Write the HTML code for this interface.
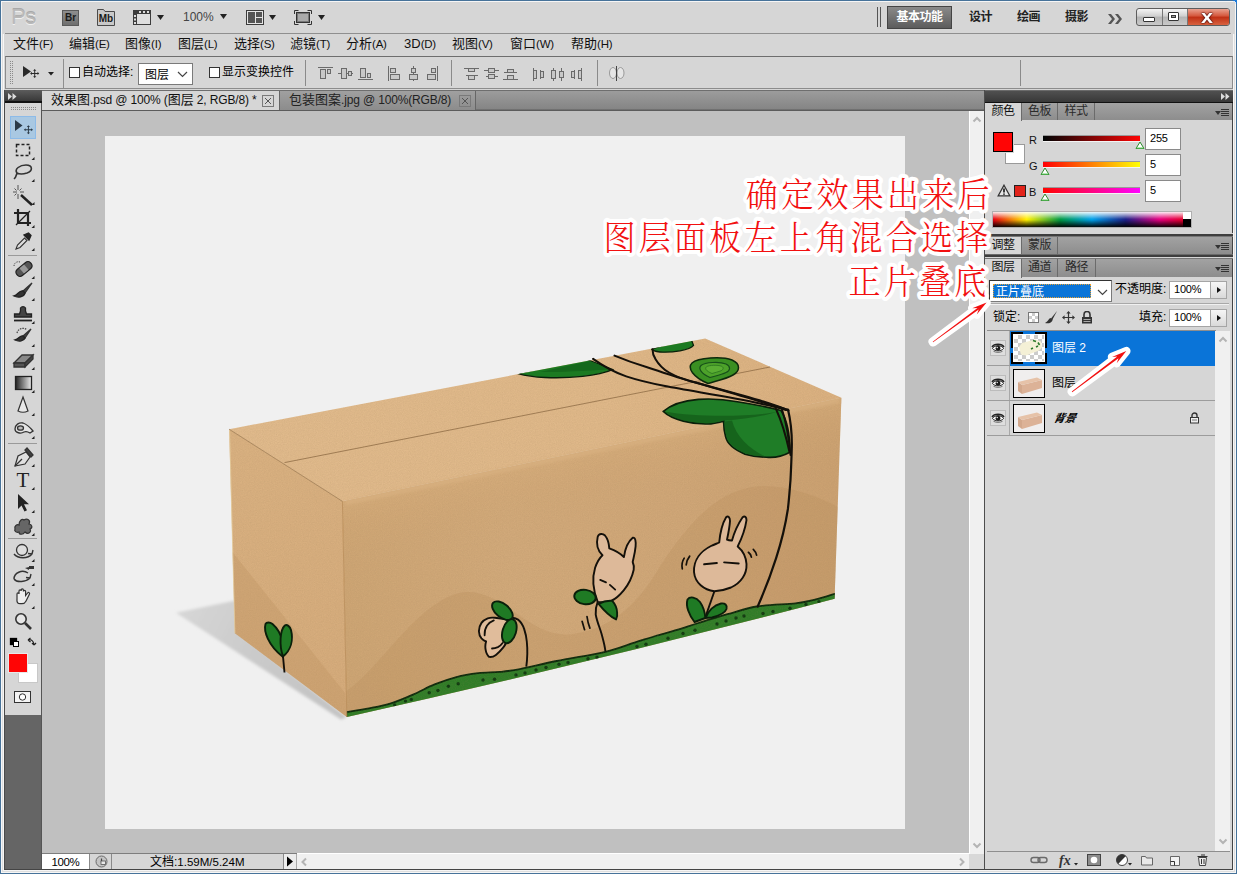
<!DOCTYPE html>
<html lang="zh-CN">
<head>
<meta charset="utf-8">
<title>Photoshop</title>
<style>
html,body{margin:0;padding:0;}
body{width:1237px;height:874px;overflow:hidden;background:#d6d6d6;font-family:"Liberation Sans","Noto Sans CJK SC",sans-serif;font-size:12px;color:#000;position:relative;}
.abs{position:absolute;}
#frame{position:absolute;left:0;top:0;width:1237px;height:874px;box-sizing:border-box;}
/* app bar */
#appbar{left:2px;top:2px;width:1232px;height:31px;background:#d6d6d6;}
#menubar{left:2px;top:34px;width:1232px;height:21px;background:#d6d6d6;}
.menu{position:absolute;top:36px;font-size:13px;line-height:16px;white-space:nowrap;color:#111;}
#optbar{left:5px;top:56px;width:1228px;height:33px;box-sizing:border-box;border:1px solid #8c8c8c;border-top-color:#6e6e6e;background:#d6d6d6;}
#tabbar{left:42px;top:90px;width:942px;height:21px;background:linear-gradient(#6e6e6e 0 1px,#9c9c9c 1px,#858585 19px,#5c5c5c 20px);}
.tab{position:absolute;top:91px;height:19px;box-sizing:border-box;font-size:13px;line-height:18px;white-space:nowrap;color:#222;}
#pasteboard{left:42px;top:111px;width:927px;height:743px;background:#c0c0c0;}
#doc{left:105px;top:136px;width:800px;height:693px;background:#f0f0f0;}
#toolbar{left:5px;top:103px;width:36px;height:612px;background:#d6d6d6;}
#tooldark{left:4px;top:715px;width:38px;height:154px;background:#656565;}
#toolhead{left:5px;top:90px;width:37px;height:13px;background:linear-gradient(#5c5c5c,#383838 85%,#111 86%);}
#rpanel{left:985px;top:90px;width:247px;height:779px;background:#d6d6d6;}
.ptabs{position:absolute;left:985px;width:247px;height:18px;background:linear-gradient(#a2a2a2,#8d8d8d);}
.ptab{position:absolute;top:0;height:18px;box-sizing:border-box;font-size:12px;letter-spacing:-0.5px;line-height:17px;text-align:center;color:#2a2a2a;border-right:1px solid #6b6b6b;}
.ptab.on{background:#d6d6d6;color:#111;height:19px;}
.ws{top:9px;font-size:12px;font-weight:bold;line-height:16px;color:#222;letter-spacing:-0.6px;}
.k{font-size:11.5px;letter-spacing:-0.2px;}
.cb{width:11px;height:11px;box-sizing:border-box;border:1px solid #333;background:#fff;}
.ot{font-size:12px;line-height:18px;white-space:nowrap;color:#000;}
.vs{top:60px;width:1px;height:26px;background:#8a8a8a;}
.xb{position:absolute;top:4px;width:12px;height:12px;box-sizing:border-box;border:1px solid #7a7a7a;background:linear-gradient(45deg,transparent 45%,#555 45% 55%,transparent 55%) center/6px 6px no-repeat,linear-gradient(-45deg,transparent 45%,#555 45% 55%,transparent 55%) center/6px 6px no-repeat;}
.l{font-size:12px;letter-spacing:-0.15px;}
.pm{position:absolute;right:3px;top:6px;width:13px;height:8px;background:linear-gradient(#333 0 1px,transparent 1px 2px,#333 2px 3px,transparent 3px 4px,#333 4px 5px,transparent 5px 6px,#333 6px 7px,transparent 7px) 5px 0/8px 8px no-repeat,linear-gradient(135deg,transparent 0,transparent 100%);}
.pm:before{content:"";position:absolute;left:-1px;top:2px;border:3px solid transparent;border-top:4px solid #333;}
.lb{font-size:11px;line-height:16px;color:#111;}
.sl{left:1043px;width:97px;height:5px;box-shadow:0 1px 0 #f4f4f4,0 -1px 0 #9a9a9a;}
.pt{font-size:12px;line-height:16px;white-space:nowrap;}
.sb{width:17px;height:18px;box-sizing:border-box;border:1px solid #a5a5a5;background:linear-gradient(#f6f6f6,#d9d9d9);}
.sb:after{content:"";position:absolute;left:6px;top:5px;border:3px solid transparent;border-left:4px solid #111;border-right:none;}
.th{left:1013px;width:32px;height:29px;box-sizing:border-box;border:1px solid #000;background:#f0eeee;}
.inp{position:absolute;background:#fff;border:1px solid #8a8a8a;box-sizing:border-box;font-size:11px;letter-spacing:-0.2px;line-height:14px;padding-left:4px;}
</style>
</head>
<body>
<div id="frame">
<div id="appbar" class="abs"></div>
<div id="menubar" class="abs"></div>

<!-- ===== application bar ===== -->
<div class="abs" style="left:11px;top:3px;font-size:22px;line-height:28px;color:#b9b9b9;letter-spacing:-0.5px;text-shadow:0 1px 0 #f2f2f2,0 -1px 0 #a8a8a8;">Ps</div>
<div class="abs" style="left:62px;top:10px;width:17px;height:16px;box-sizing:border-box;background:linear-gradient(#8e8e8e,#6f6f6f);border:1px solid #5a5a5a;color:#1a1a1a;font-size:10px;font-weight:bold;line-height:14px;text-align:center;">Br</div>
<svg class="abs" style="left:96px;top:8px" width="20" height="19" viewBox="0 0 20 19"><path d="M1.5 1.5h6l1.5 2h9.500v14h-17z" fill="#c9c9c9" stroke="#4a4a4a"/><text x="10" y="14" font-size="10" font-weight="bold" text-anchor="middle" fill="#1a1a1a" font-family="Liberation Sans, sans-serif">Mb</text></svg>
<svg class="abs" style="left:132px;top:9px" width="34" height="17" viewBox="0 0 34 17"><rect x="1.5" y="1.500" width="17" height="14" fill="#dedede" stroke="#3c3c3c"/><rect x="1" y="1" width="18" height="4" fill="#3c3c3c"/><rect x="1" y="1" width="4" height="15" fill="#3c3c3c"/><g fill="#ddd"><rect x="2" y="6" width="2" height="2"/><rect x="2" y="9.500" width="2" height="2"/><rect x="2" y="13" width="2" height="2"/><rect x="7" y="2" width="2" height="2"/><rect x="11" y="2" width="2" height="2"/><rect x="15" y="2" width="2" height="2"/></g><path d="M25 6h7l-3.500 5z" fill="#222"/></svg>
<div class="abs" style="left:183px;top:10px;font-size:12px;line-height:14px;color:#444;">100%</div>
<svg class="abs" style="left:219px;top:13px" width="9" height="7"><path d="M1 1h7l-3.500 5z" fill="#222"/></svg>
<svg class="abs" style="left:245px;top:9px" width="34" height="17" viewBox="0 0 34 17"><rect x="1.500" y="1.500" width="17" height="14" fill="#e6e6e6" stroke="#3c3c3c"/><rect x="3" y="3" width="7" height="11" fill="#555"/><rect x="11" y="3" width="6" height="5" fill="#555"/><rect x="11" y="9" width="6" height="5" fill="#555"/><path d="M24 6h7l-3.500 5z" fill="#222"/></svg>
<svg class="abs" style="left:293px;top:9px" width="34" height="17" viewBox="0 0 34 17"><path d="M1.500 5v-3.500h4M14.500 1.500h4v3.500M18.500 12v3.500h-4M5.500 15.500h-4v-3.500" fill="none" stroke="#333"/><rect x="3.500" y="3.500" width="13" height="10" fill="#777" stroke="#333"/><rect x="5" y="5" width="10" height="7" fill="#aaa"/><path d="M25 6h7l-3.500 5z" fill="#222"/></svg>
<div class="abs" style="left:877px;top:7px;width:1px;height:20px;background:#555;"></div><div class="abs" style="left:880px;top:7px;width:1px;height:20px;background:#555;"></div>
<div class="abs" style="left:887px;top:6px;width:65px;height:23px;box-sizing:border-box;border:1px solid #444;background:linear-gradient(#8a8a8a,#5c5c5c);color:#fff;font-size:12px;font-weight:bold;line-height:20px;text-align:center;letter-spacing:-0.500px;">基本功能</div>
<div class="abs ws" style="left:969px;">设计</div>
<div class="abs ws" style="left:1017px;">绘画</div>
<div class="abs ws" style="left:1065px;">摄影</div>
<svg class="abs" style="left:1107px;top:12.500px" width="16" height="12" viewBox="0 0 16 12"><path d="M1 1h3l4 5-4 5h-3l4-5zM8 1h3l4 5-4 5h-3l4-5z" fill="#555"/></svg>
<!-- window buttons -->
<div class="abs" style="left:1136px;top:8px;width:94px;height:18px;box-sizing:border-box;border:1px solid #5d5d5d;border-radius:3px;background:linear-gradient(#f4f4f4,#cfcfcf 45%,#b4b4b4 50%,#c9c9c9);overflow:hidden;">
 <div class="abs" style="left:25px;top:0;width:1px;height:16px;background:#777;"></div>
 <div class="abs" style="left:50px;top:0;width:42px;height:16px;background:linear-gradient(#e9a18f,#d4553a 45%,#bf2f14 50%,#d8623f);border-left:1px solid #777;"></div>
 <div class="abs" style="left:6px;top:8px;width:10px;height:3px;border:1px solid #333;background:#fff;border-radius:1px;"></div>
 <div class="abs" style="left:31px;top:3px;width:9px;height:7px;border:1px solid #333;background:#fff;border-radius:1px;"><div class="abs" style="left:2px;top:2px;width:3px;height:1px;border:1px solid #333;background:#999;"></div></div>
 <div class="abs" style="left:65px;top:-1.500px;transform:scaleX(1.2);font-size:18px;font-weight:bold;color:#fff;line-height:18px;text-shadow:0 0 2px #400,0 0 1px #400,0 0 1px #400;">x</div>
</div>
<div class="abs" style="left:5px;top:33px;width:1226px;height:1px;background:#8f8f8f;"></div>
<!-- ===== menu bar ===== -->
<div class="menu" style="left:13px;">文件<span class="k">(F)</span></div>
<div class="menu" style="left:69px;">编辑<span class="k">(E)</span></div>
<div class="menu" style="left:125px;">图像<span class="k">(I)</span></div>
<div class="menu" style="left:178px;">图层<span class="k">(L)</span></div>
<div class="menu" style="left:234px;">选择<span class="k">(S)</span></div>
<div class="menu" style="left:290px;">滤镜<span class="k">(T)</span></div>
<div class="menu" style="left:346px;">分析<span class="k">(A)</span></div>
<div class="menu" style="left:404px;">3D<span class="k">(D)</span></div>
<div class="menu" style="left:452px;">视图<span class="k">(V)</span></div>
<div class="menu" style="left:510px;">窗口<span class="k">(W)</span></div>
<div class="menu" style="left:571px;">帮助<span class="k">(H)</span></div>
<div id="optbar" class="abs"></div>
<div id="tabbar" class="abs"></div>

<!-- ===== options bar ===== -->
<div class="abs" style="left:9px;top:61px;width:4px;height:24px;background:conic-gradient(#8a8a8a 25%,transparent 0) 0 0/2px 2px;"></div>
<svg class="abs" style="left:21px;top:64px" width="36" height="18" viewBox="0 0 36 18"><path d="M2 2v11l8-5.500z" fill="#2a2a2a"/><path d="M14 5.500l2 2.200h-1.400v2.900h2.900v-1.400l2.200 2-2.200 2v-1.400h-2.900v2.900h1.400l-2 2.200-2-2.200h1.400v-2.900h-2.900v1.400l-2.200-2 2.200-2v1.400h2.900v-2.900h-1.400z" fill="#2a2a2a" transform="translate(2.500,0.500) scale(.8)"/><path d="M27 8h6l-3 3.500z" fill="#222"/></svg>
<div class="abs" style="left:63px;top:59px;width:1px;height:29px;background:#8f8f8f;"></div>
<div class="abs cb" style="left:69px;top:67px;"></div>
<div class="abs ot" style="left:82px;top:63px;">自动选择:</div>
<div class="abs" style="left:138px;top:63px;width:55px;height:22px;box-sizing:border-box;background:#fff;border:1px solid #7a7a7a;font-size:12px;line-height:22px;padding-left:6px;">图层<svg class="abs" style="left:38px;top:7px" width="11" height="7"><path d="M1 1l4.500 4.500L10 1" fill="none" stroke="#444" stroke-width="1.200"/></svg></div>
<div class="abs cb" style="left:209px;top:67px;"></div>
<div class="abs ot" style="left:222px;top:63px;">显示变换控件</div>
<div class="abs vs" style="left:305px;"></div>
<svg class="abs" style="left:317px;top:65px" width="126" height="18" viewBox="0 0 126 18" fill="#c8c8c8" stroke="#6a6a6a">
 <path d="M1 2.500h15" /><rect x="3.500" y="4.500" width="5" height="9"/><rect x="10.500" y="4.500" width="3" height="4"/>
 <path d="M21 8.500h15"/><rect x="24.500" y="3.500" width="5" height="10"/><rect x="31.500" y="6.500" width="3" height="4"/>
 <path d="M41 14.500h15"/><rect x="43.500" y="3.500" width="5" height="9"/><rect x="50.500" y="8.500" width="3" height="4"/>
 <path d="M71.500 1v15"/><rect x="73.500" y="3.500" width="5" height="4"/><rect x="73.500" y="9.500" width="9" height="5"/>
 <path d="M96.500 1v15"/><rect x="94.500" y="3.500" width="4" height="4"/><rect x="92.500" y="9.500" width="8" height="5"/>
 <path d="M120.500 1v15"/><rect x="114.500" y="3.500" width="4" height="4"/><rect x="110.500" y="9.500" width="8" height="5"/>
</svg>
<div class="abs vs" style="left:451px;"></div>
<svg class="abs" style="left:462px;top:65px" width="126" height="18" viewBox="0 0 126 18" fill="#c8c8c8" stroke="#6a6a6a">
 <path d="M2 3.500h15M4 10.500h12"/><rect x="6.500" y="3.500" width="6" height="3"/><rect x="6.500" y="10.500" width="6" height="4"/>
 <path d="M22 5.500h15M24 11.500h12"/><rect x="26.500" y="3.500" width="6" height="4"/><rect x="26.500" y="9.500" width="6" height="4"/>
 <path d="M42 7.500h13M41 14.500h15"/><rect x="45.500" y="4.500" width="6" height="3"/><rect x="45.500" y="10.500" width="6" height="4"/>
 <path d="M71.500 3v13M78.500 5v9"/><rect x="71.500" y="5.500" width="3" height="8"/><rect x="78.500" y="6.500" width="3" height="6"/>
 <path d="M91.500 3v13M99.500 3v13"/><rect x="89.500" y="5.500" width="4" height="8"/><rect x="97.500" y="6.500" width="4" height="6"/>
 <path d="M112.500 5v9M119.500 3v13"/><rect x="109.500" y="6.500" width="3" height="6"/><rect x="116.500" y="5.500" width="3" height="8"/>
</svg>
<div class="abs vs" style="left:597px;"></div>
<svg class="abs" style="left:608px;top:65px" width="18" height="18" viewBox="0 0 18 18"><ellipse cx="5" cy="8" rx="3.500" ry="5.500" fill="#e6e6e6" stroke="#9a9a9a"/><ellipse cx="12.500" cy="8" rx="3.500" ry="5.500" fill="#e6e6e6" stroke="#9a9a9a"/><path d="M8.500 1v15" stroke="#444"/></svg>
<div class="abs vs" style="left:1020px;"></div>
<!-- ===== doc tabs ===== -->
<div class="tab" style="left:42px;width:238px;background:#d6d6d6;border-right:1px solid #666;padding-left:9px;color:#111;">效果图<span class="l">.psd @ 100% (</span>图层<span class="l"> 2, RGB/8) *</span><span class="xb" style="left:220px;"></span></div>
<div class="tab" style="left:280px;width:196px;background:linear-gradient(#a0a0a0,#8c8c8c);border-right:1px solid #666;padding-left:9px;">包装图案<span class="l">.jpg @ 100%(RGB/8)</span><span class="xb" style="left:179px;"></span></div>
<div id="pasteboard" class="abs"></div>
<div id="doc" class="abs"></div>
<div id="toolhead" class="abs"></div>
<div id="toolbar" class="abs"></div>
<div id="tooldark" class="abs"></div>

<!-- ===== toolbar ===== -->
<div class="abs" style="left:4px;top:90px;width:1px;height:779px;background:#4a4a4a;"></div>
<div class="abs" style="left:41px;top:103px;width:1px;height:766px;background:#555;"></div>
<svg class="abs" style="left:8px;top:93px" width="9" height="7"><path d="M0 0l4 3.500-4 3.500zM4.500 0l4 3.500-4 3.500z" fill="#ddd"/></svg>
<div class="abs" style="left:10px;top:107px;width:27px;height:3px;background:conic-gradient(#8a8a8a 25%,transparent 0) 0 0/2px 2px;"></div>
<div class="abs" style="left:10px;top:116px;width:26px;height:23px;box-sizing:border-box;background:#a9c8e2;border:1px solid #8dbbe8;"></div>
<svg class="abs" style="left:5px;top:111px" width="36" height="600" viewBox="0 0 36 600" fill="none" stroke="#333" stroke-width="1.300">
 <!-- move (cy 16) -->
 <path d="M10 9v11l7.500-5.500z" fill="#2b3946" stroke="none"/>
 <path d="M23.500 13l2 2.200h-1.400v2.900h2.900v-1.400l2.200 2-2.200 2v-1.400h-2.900v2.900h1.400l-2 2.200-2-2.200h1.400v-2.900h-2.900v1.400l-2.200-2 2.200-2v1.400h2.900v-2.900h-1.400z" fill="#2b3946" stroke="none" transform="translate(4.600,3.800) scale(.8)"/>
 <!-- marquee (cy 39) -->
 <rect x="11.500" y="33.500" width="13" height="11" stroke-dasharray="3 2" stroke="#222" stroke-width="1.500"/>
 <!-- lasso (cy 61) -->
 <path d="M12 62c-3-4 3-8 9-8 7 0 7 6 1 8-4 1.200-8 1-10 0zM12 62c-1 2-0.500 4-3 6" stroke="#333" stroke-width="1.600"/>
 <!-- magic wand (cy 84) -->
 <path d="M16 84l11 10" stroke="#222" stroke-width="2.400"/><path d="M13 74v5M13 83v5M8 81h4M15 81h4M9.500 77.500l2 2M16.500 77.500l-2 2M9.500 84.500l2-2" stroke="#555" stroke-width="1"/>
 <!-- crop (cy 107) -->
 <path d="M13 98v14h13M9 102h14v13" stroke="#222" stroke-width="2.200"/><path d="M11 114l14-14" stroke="#222" stroke-width="1.200"/>
 <!-- eyedropper (cy 130) -->
 <path d="M11 138l1.500-4 7-7 2.500 2.500-7 7z" fill="#ddd" stroke="#333" stroke-width="1.100"/><path d="M19 124l5 5 2-4.500-2.500-2.500z" fill="#222" stroke="#222"/>
 <!-- sep -->
 <path d="M3 144.500h29" stroke="#9a9a9a" stroke-width="1"/>
 <!-- healing (cy 158) -->
 <g transform="rotate(-40 19 158)"><rect x="10" y="154" width="18" height="8" rx="3.500" fill="#555" stroke="#222"/><rect x="16" y="154.500" width="6" height="7" fill="#999" stroke="none"/></g><path d="M9 155c0-3 3-5 6-4" stroke="#444" stroke-dasharray="1.200 1.200" stroke-width="1"/>
 <!-- brush (cy 180) -->
 <path d="M27 172l-9 8 2 2z" fill="#444" stroke="#333"/><path d="M18 180c-4-1-5 4-9 5 4 2 10 1 11-3z" fill="#333" stroke="#222"/>
 <!-- stamp (cy 203) -->
 <path d="M15.500 200v-3a3 3 0 0 1 5 0v3l1 3h5v3h-17v-3h5z" fill="#444" stroke="#222"/><path d="M9 209.500h18" stroke="#222" stroke-width="1.800"/>
 <!-- history brush (cy 226) -->
 <path d="M26 218l-8 7 2 2z" fill="#444" stroke="#333"/><path d="M18 225c-3-1-4 3-8 4 4 2 9 1 10-2z" fill="#333" stroke="#222"/><path d="M12 222a6 6 0 0 1 10-3" stroke="#444" stroke-dasharray="1.500 1" stroke-width="1.200"/>
 <!-- eraser (cy 249) -->
 <path d="M9 252l8-8h11l-8 8z" fill="#888" stroke="#333"/><path d="M9 252h11v4h-11z" fill="#555" stroke="#333"/><path d="M20 252l8-8v4l-8 8z" fill="#444" stroke="#333"/>
 <!-- gradient (cy 272) -->
 <rect x="10.500" y="265.500" width="16" height="13" fill="url(#gtool)" stroke="#222"/>
 <!-- blur (cy 295) -->
 <path d="M18 286l5 14c-3 1.500-7 1.500-10 0z" fill="#e8e8e8" stroke="#333" stroke-width="1.200"/>
 <!-- dodge (cy 318) -->
 <path d="M10 318c0-4 4-7 8-6 3 1 6 3 10 8l-3 2c-3-2-4-2-6-1-3 2-9 1-9-3z" fill="#e4e4e4" stroke="#333" stroke-width="1.300"/><ellipse cx="15.500" cy="317" rx="3" ry="2.200" fill="#bbb" stroke="#333"/>
 <!-- sep -->
 <path d="M3 332.500h29" stroke="#9a9a9a" stroke-width="1"/>
 <!-- pen (cy 346) -->
 <path d="M10 355l3-10 8-4 4 5-5 7z" fill="#e0e0e0" stroke="#333" stroke-width="1.200"/><path d="M10 355l7-7" stroke="#333"/><path d="M20 339l6 7 2-2-6-7z" fill="#444" stroke="#333"/>
 <!-- T (cy 369) -->
 <text x="18" y="376" font-family="Liberation Serif, serif" font-size="21" text-anchor="middle" fill="#222" stroke="none">T</text>
 <!-- path select (cy 392) -->
 <path d="M13 383v15l3.500-3.500 3 6 2.500-1.200-3-6h5z" fill="#222" stroke="none"/>
 <!-- custom shape (cy 415) -->
 <path d="M10 418c-1-3 2-5 4-4 0-4 3-7 5-5 3-2 7 0 5 4 3 0 4 4 1 5 2 3-2 6-5 3-2 3-6 3-6 0-3 1-5-1-4-3z" fill="#666" stroke="#333" stroke-width="1.200"/>
 <!-- sep -->
 <path d="M3 427.500h29" stroke="#9a9a9a" stroke-width="1"/>
 <!-- 3d rotate (cy 441) -->
 <circle cx="17" cy="439" r="5.500" fill="#ddd" stroke="#333"/><path d="M9 443c4 5 14 5 18 0M27 443l1-4M27 443l-4-.5" stroke="#333" stroke-width="1.400"/>
 <!-- 3d orbit (cy 465) -->
 <path d="M9 468c0-6 8-10 14-6M9 468c3 4 12 3 16-1M25 467l1-4M25 467l-4-.5" stroke="#333" stroke-width="1.400"/><rect x="24" y="455" width="5" height="3" fill="#333" stroke="none"/><path d="M20 457l4-1v3z" fill="#333" stroke="none"/>
 <!-- hand (cy 488) -->
 <path d="M12 489v-6c0-1.500 2-1.500 2 0v-3c0-1.500 2.200-1.500 2.200 0v-1c0-1.500 2.200-1.500 2.200 0v1.500c0-1.500 2.200-1.500 2.200 0v4l2-2.500c1-1.200 2.500 0 1.800 1.200l-3.500 7c-1 2-2 2.500-4 2.500h-2c-2 0-3-1.500-3-3.700z" fill="#eee" stroke="#333" stroke-width="1.200"/>
 <!-- zoom (cy 510) -->
 <circle cx="16" cy="508" r="5.200" fill="#e6e6e6" stroke="#333" stroke-width="1.600"/><path d="M20 512l6 6" stroke="#333" stroke-width="2.600"/>
 <!-- default / swap -->
 <rect x="5.500" y="527.500" width="6" height="6" fill="#000" stroke="#000"/><rect x="8.500" y="530.500" width="5" height="5" fill="#fff" stroke="#000" stroke-width="1"/>
 <path d="M23 529c3-1 6 1 6 5M23 529l2.500-2M23 529l2.500 2M29 534l-2-2M29 534l2-2" stroke="#222" stroke-width="1.200"/>
 <defs><linearGradient id="gtool" x1="0" x2="1"><stop offset="0" stop-color="#222"/><stop offset="1" stop-color="#eee"/></linearGradient></defs>
</svg>
<!-- sub-tool triangles -->
<svg class="abs" style="left:5px;top:111px" width="36" height="520" viewBox="0 0 36 520" fill="#222">
 <path d="M29.500 49h-3l3-3z"/><path d="M29.500 71h-3l3-3z"/><path d="M29.500 94h-3l3-3z"/><path d="M29.500 117h-3l3-3z"/><path d="M29.500 140h-3l3-3z"/><path d="M29.500 168h-3l3-3z"/><path d="M29.500 190h-3l3-3z"/><path d="M29.500 213h-3l3-3z"/><path d="M29.500 236h-3l3-3z"/><path d="M29.500 259h-3l3-3z"/><path d="M29.500 282h-3l3-3z"/><path d="M29.500 305h-3l3-3z"/><path d="M29.500 328h-3l3-3z"/><path d="M29.500 356h-3l3-3z"/><path d="M29.500 379h-3l3-3z"/><path d="M29.500 402h-3l3-3z"/><path d="M29.500 425h-3l3-3z"/><path d="M29.500 451h-3l3-3z"/><path d="M29.500 475h-3l3-3z"/><path d="M29.500 498h-3l3-3z"/>
</svg>
<div class="abs" style="left:18px;top:663px;width:20px;height:20px;box-sizing:border-box;background:#fff;border:1px solid #c8c8c8;"></div>
<div class="abs" style="left:8px;top:653px;width:20px;height:20px;box-sizing:border-box;background:#ff0505;border:1px solid #e8e8e8;"></div>
<svg class="abs" style="left:14px;top:691px" width="17" height="12" viewBox="0 0 17 12"><rect x=".5" y=".5" width="16" height="11" fill="#f4f4f4" stroke="#333"/><circle cx="8.500" cy="6" r="3.200" fill="#fff" stroke="#333"/></svg>
<!-- ===== status bar / scrollbars ===== -->
<div class="abs" style="left:42px;top:853px;width:255px;height:1px;background:#7d7d7d;"></div>
<div class="abs" style="left:42px;top:854px;width:942px;height:15px;background:#d6d6d6;"></div>
<div class="abs" style="left:42px;top:854px;width:48px;height:15px;background:#fff;font-size:11.500px;letter-spacing:-0.4px;line-height:16px;text-align:center;color:#000;border-right:1px solid #8a8a8a;box-sizing:border-box;">100%</div>
<svg class="abs" style="left:95px;top:855px" width="13" height="13" viewBox="0 0 13 13"><circle cx="6.500" cy="6.500" r="5.500" fill="#c4c4c4" stroke="#6a6a6a"/><path d="M6.500 3.500v3.500h3.500" fill="none" stroke="#444" stroke-width="1.200"/><rect x="6" y="6" width="4.500" height="3.500" fill="#e8e8e8" stroke="#555" stroke-width=".8"/></svg>
<div class="abs" style="left:111px;top:854px;width:1px;height:15px;background:#8a8a8a;"></div>
<div class="abs" style="left:150px;top:854px;font-size:12px;line-height:16px;color:#000;white-space:nowrap;">文档:<span style="font-size:11.500px">1.59M/5.24M</span></div>
<div class="abs" style="left:283px;top:854px;width:14px;height:15px;background:#ececec;border-left:1px solid #8a8a8a;border-right:1px solid #aaa;box-sizing:border-box;"></div>
<svg class="abs" style="left:286px;top:856px" width="8" height="11"><path d="M1 0.500l6 5-6 5z" fill="#000"/></svg>
<div class="abs" style="left:297px;top:853px;width:672px;height:16px;background:#f0f0f0;border-top:1px solid #fff;box-sizing:border-box;"></div>
<svg class="abs" style="left:301px;top:857px" width="7" height="10"><path d="M5 1.500l-3.500 3.500 3.500 3.500" fill="none" stroke="#b4b4b4" stroke-width="2"/></svg>
<svg class="abs" style="left:958px;top:857px" width="7" height="10"><path d="M2 1.500l3.500 3.500-3.500 3.500" fill="none" stroke="#b4b4b4" stroke-width="2"/></svg>
<div class="abs" style="left:969px;top:111px;width:15px;height:743px;background:#f0f0f0;border-left:1px solid #fff;box-sizing:border-box;"></div>
<div class="abs" style="left:969px;top:854px;width:15px;height:15px;background:#d8d8d8;"></div>
<svg class="abs" style="left:972px;top:116px" width="10" height="7"><path d="M1.500 5.500l3.500-3.500 3.500 3.500" fill="none" stroke="#b4b4b4" stroke-width="2"/></svg>
<svg class="abs" style="left:971.500px;top:842px" width="10" height="7"><path d="M1.500 1.500l3.500 3.500 3.500-3.500" fill="none" stroke="#b4b4b4" stroke-width="2"/></svg>
<!-- ===== window frame ===== -->
<div class="abs" style="left:4px;top:869px;width:1229px;height:1px;background:#444;"></div>
<div class="abs" style="left:1232px;top:90px;width:1px;height:780px;background:#444;"></div>
<div class="abs" style="left:0;top:0;width:1237px;height:874px;box-sizing:border-box;border:1px solid #47739a;box-shadow:inset 0 0 0 1px #f6f6f6;pointer-events:none;"></div>
<div class="abs" style="left:2px;top:34px;width:1233px;height:838px;box-sizing:border-box;border:1px solid #dedede;border-top:none;box-shadow:inset 1px 0 0 #f6f6f6,inset -1px 0 0 #f6f6f6,inset 0 -1px 0 #f6f6f6;pointer-events:none;"></div>
<div class="abs" style="left:1233px;top:0;width:4px;height:4px;background:radial-gradient(circle at 0 100%,transparent 2.500px,#dfe8f0 2.500px 3.500px,#1e7ad6 3.500px);"></div>
<div id="rpanel" class="abs"></div>
<!-- ===== right panels ===== -->
<div class="abs" style="left:984px;top:90px;width:1px;height:779px;background:#4d4d4d;"></div>
<div class="abs" style="left:985px;top:90px;width:248px;height:13px;background:linear-gradient(#6a6a6a 0 1px,#505050 1px,#383838 12px,#111 12px);"></div>
<svg class="abs" style="left:1221px;top:93px" width="9" height="7"><path d="M0 0l4 3.500-4 3.500zM4.500 0l4 3.500-4 3.500z" fill="#ddd"/></svg>
<div class="ptabs" style="top:103px;height:17px;"><div class="ptab on" style="left:0;width:37px;height:18px;">颜色</div><div class="ptab" style="left:37px;width:36px;height:17px;">色板</div><div class="ptab" style="left:73px;width:37px;height:17px;">样式</div><span class="pm"></span></div>
<!-- color panel -->
<div class="abs" style="left:1005px;top:144px;width:20px;height:20px;box-sizing:border-box;background:#fff;border:1px solid #9a9a9a;"></div>
<div class="abs" style="left:993px;top:132px;width:20px;height:20px;box-sizing:border-box;background:#ff0505;border:1px solid #000;box-shadow:0 0 0 1px #d6d6d6;"></div>
<div class="abs lb" style="left:1029px;top:132px;">R</div>
<div class="abs lb" style="left:1029px;top:158px;">G</div>
<div class="abs lb" style="left:1029px;top:184px;">B</div>
<div class="abs sl" style="top:136px;background:linear-gradient(90deg,#000505,#ff0505);"></div>
<div class="abs sl" style="top:162px;background:linear-gradient(90deg,#ff0005,#ffff05);"></div>
<div class="abs sl" style="top:188px;background:linear-gradient(90deg,#ff0500,#ff05ff);"></div>
<svg class="abs" style="left:1135px;top:141px" width="10" height="9"><path d="M5 1l4 6.500h-8z" fill="#fff" stroke="#2e8b2e"/><path d="M1.500 7h7" stroke="#6c6"/></svg>
<svg class="abs" style="left:1040px;top:167px" width="10" height="9"><path d="M5 1l4 6.500h-8z" fill="#fff" stroke="#2e8b2e"/><path d="M1.500 7h7" stroke="#6c6"/></svg>
<svg class="abs" style="left:1040px;top:193px" width="10" height="9"><path d="M5 1l4 6.500h-8z" fill="#fff" stroke="#2e8b2e"/><path d="M1.500 7h7" stroke="#6c6"/></svg>
<div class="inp" style="left:1145px;top:128px;width:36px;height:22px;padding-top:2px;">255</div>
<div class="inp" style="left:1145px;top:154px;width:36px;height:22px;padding-top:2px;">5</div>
<div class="inp" style="left:1145px;top:180px;width:36px;height:22px;padding-top:2px;">5</div>
<svg class="abs" style="left:997px;top:184px" width="14" height="13" viewBox="0 0 14 13"><path d="M7 1.200l5.800 10.600h-11.600z" fill="#e8e8e8" stroke="#333" stroke-width="1.300"/><path d="M7 4.500v4M7 9.500v1.300" stroke="#111" stroke-width="1.600"/></svg>
<div class="abs" style="left:1014px;top:185px;width:12px;height:12px;box-sizing:border-box;background:#e2231a;border:1px solid #222;"></div>
<div class="abs" style="left:993px;top:212px;width:198px;height:15px;background:linear-gradient(rgba(255,255,255,.92),rgba(255,255,255,0) 48%,rgba(0,0,0,0) 52%,rgba(0,0,0,.95)),linear-gradient(90deg,#e60012,#fff100 17%,#009944 34%,#00a0e9 50%,#1d2088 67%,#e4007f 84%,#e60012);box-shadow:0 0 0 1px #b0b0b0;"></div>
<div class="abs" style="left:1183px;top:212px;width:8px;height:7px;background:#fff;"></div><div class="abs" style="left:1183px;top:219px;width:8px;height:8px;background:#000;"></div>
<!-- adjustments -->
<div class="abs" style="left:985px;top:233px;width:248px;height:4px;background:linear-gradient(#d6d6d6 0 1px,#3e3e3e 1px 3px,#777 3px);"></div>
<div class="ptabs" style="top:237px;height:17px;"><div class="ptab on" style="left:0;width:37px;height:17px;">调整</div><div class="ptab" style="left:37px;width:36px;height:17px;">蒙版</div><span class="pm"></span></div>
<div class="abs" style="left:985px;top:254px;width:248px;height:5px;background:linear-gradient(#6a6a6a 0 1px,#3e3e3e 1px 3px,#d6d6d6 3px 4px,#777 4px);"></div>
<!-- layers -->
<div class="ptabs" style="top:259px;"><div class="ptab on" style="left:0;width:37px;">图层</div><div class="ptab" style="left:37px;width:36px;">通道</div><div class="ptab" style="left:73px;width:38px;">路径</div><span class="pm"></span></div>
<div class="abs" style="left:989px;top:280px;width:123px;height:22px;box-sizing:border-box;background:#fff;border:1px solid #333;border-right-color:#7a7a7a;border-bottom-color:#7a7a7a;">
 <div class="abs" style="left:3px;top:3px;width:98px;height:14px;background:#0a74d8;outline:1px dotted #e8a030;outline-offset:-1px;color:#fff;font-size:12px;line-height:16px;padding-left:3px;box-sizing:border-box;overflow:hidden;">正片叠底</div>
 <svg class="abs" style="left:107px;top:8px" width="11" height="7"><path d="M1 1l4.500 4.500L10 1" fill="none" stroke="#444" stroke-width="1.200"/></svg>
</div>
<div class="abs pt" style="left:1115px;top:281px;">不透明度:</div>
<div class="inp" style="left:1169px;top:281px;width:42px;height:18px;border-color:#a5a5a5;line-height:15px;">100%</div>
<div class="abs sb" style="left:1210px;top:281px;"></div>
<div class="abs" style="left:989px;top:304px;width:240px;height:1px;background:#f0f0f0;"></div><div class="abs" style="left:989px;top:303px;width:240px;height:1px;background:#a8a8a8;"></div>
<div class="abs pt" style="left:993px;top:309px;">锁定:</div>
<div class="abs" style="left:1028px;top:312px;width:11px;height:11px;box-sizing:border-box;border:1px solid #777;background:conic-gradient(#ccc 25%,#fff 0 50%,#ccc 0 75%,#fff 0);background-size:6px 6px;"></div>
<svg class="abs" style="left:1044px;top:310px" width="14" height="15" viewBox="0 0 14 15"><path d="M13 1l-6 7.500 1.500 1z" fill="#333"/><path d="M7 8c-2.500 0-2.500 3.500-6 5 3 1 7 0 7.800-3.600z" fill="#333"/></svg>
<svg class="abs" style="left:1062px;top:311px" width="13" height="13" viewBox="0 0 13 13"><path d="M6.500 0l2.200 2.600h-1.600v3.300h3.300v-1.600l2.600 2.200-2.600 2.200v-1.600h-3.300v3.300h1.600l-2.200 2.600-2.200-2.600h1.600v-3.300h-3.300v1.600l-2.600-2.200 2.600-2.200v1.600h3.300v-3.300h-1.600z" fill="#333"/></svg>
<svg class="abs" style="left:1081px;top:311px" width="12" height="13" viewBox="0 0 12 13"><path d="M3 6v-2.500a3 3 0 0 1 6 0v2.500" fill="none" stroke="#333" stroke-width="1.600"/><rect x="1" y="6" width="10" height="6.500" fill="#333"/><rect x="2.500" y="8" width="7" height="1" fill="#aaa"/><rect x="2.500" y="10" width="7" height="1" fill="#aaa"/></svg>
<div class="abs pt" style="left:1139px;top:309px;">填充:</div>
<div class="inp" style="left:1169px;top:309px;width:42px;height:18px;border-color:#a5a5a5;line-height:15px;">100%</div>
<div class="abs sb" style="left:1210px;top:309px;"></div>
<!-- layer rows -->
<div class="abs" style="left:987px;top:330px;width:229px;height:1px;background:#8e8e8e;"></div>
<div class="abs" style="left:1010px;top:331px;width:205px;height:35px;background:#0a74d8;"></div>
<div class="abs" style="left:1009px;top:331px;width:1px;height:105px;background:#a8a8a8;"></div>
<div class="abs" style="left:987px;top:365px;width:229px;height:1px;background:#9c9c9c;"></div>
<div class="abs" style="left:987px;top:400px;width:229px;height:1px;background:#9c9c9c;"></div>
<div class="abs" style="left:987px;top:435px;width:229px;height:1px;background:#9c9c9c;"></div>
<div class="abs" style="left:1010px;top:365px;width:205px;height:1px;background:#0a74d8;"></div>
<svg class="abs" style="left:990px;top:340px" width="16" height="16" viewBox="0 0 16 16"><rect x=".5" y=".5" width="15" height="15" fill="#dedede" stroke="#bcbcbc"/><path d="M2.500 8.500c2-3.800 9-3.800 11 0-2 3-9 3-11 0z" fill="#f4f4f4" stroke="#222" stroke-width="1"/><circle cx="8" cy="8.200" r="2.400" fill="#1a1a1a"/><circle cx="7.200" cy="7.500" r=".7" fill="#fff"/><path d="M2 7c2.200-3.600 9.800-3.600 12 0" stroke="#222" stroke-width="1.500" fill="none"/><path d="M3.500 11.300c2.500 1.400 6.500 1.400 9 0" stroke="#555" stroke-width=".8" fill="none"/></svg> <svg class="abs" style="left:990px;top:375px" width="16" height="16" viewBox="0 0 16 16"><rect x=".5" y=".5" width="15" height="15" fill="#dedede" stroke="#bcbcbc"/><path d="M2.500 8.500c2-3.800 9-3.800 11 0-2 3-9 3-11 0z" fill="#f4f4f4" stroke="#222" stroke-width="1"/><circle cx="8" cy="8.200" r="2.400" fill="#1a1a1a"/><circle cx="7.200" cy="7.500" r=".7" fill="#fff"/><path d="M2 7c2.200-3.600 9.800-3.600 12 0" stroke="#222" stroke-width="1.500" fill="none"/><path d="M3.500 11.300c2.500 1.400 6.500 1.400 9 0" stroke="#555" stroke-width=".8" fill="none"/></svg> <svg class="abs" style="left:990px;top:410px" width="16" height="16" viewBox="0 0 16 16"><rect x=".5" y=".5" width="15" height="15" fill="#dedede" stroke="#bcbcbc"/><path d="M2.500 8.500c2-3.800 9-3.800 11 0-2 3-9 3-11 0z" fill="#f4f4f4" stroke="#222" stroke-width="1"/><circle cx="8" cy="8.200" r="2.400" fill="#1a1a1a"/><circle cx="7.200" cy="7.500" r=".7" fill="#fff"/><path d="M2 7c2.200-3.600 9.800-3.600 12 0" stroke="#222" stroke-width="1.500" fill="none"/><path d="M3.500 11.300c2.500 1.400 6.500 1.400 9 0" stroke="#555" stroke-width=".8" fill="none"/></svg>
<div class="abs" style="left:1013px;top:334px;width:32px;height:28px;box-sizing:border-box;border:1px solid #fff;background:conic-gradient(#ccc 25%,#fff 0 50%,#ccc 0 75%,#fff 0);background-size:8px 8px;"></div>
<svg class="abs" style="left:1011px;top:332px" width="36" height="32" viewBox="0 0 36 32"><path d="M8 15l3-4 13-3.500 6 2 1 6-3 3-13 5-5-1z" fill="#f4f0d6"/><path d="M22 8.500l3 1M27 10.500l1.500 2.500M25 15l2-1M20 17l2-1" stroke="#2b7a2b" stroke-width="1.600" fill="none"/><path d="M1 16V1H12M24 1H35V16M35 21V31H24M12 31H1V21" stroke="#000" stroke-width="2" fill="none"/></svg>
<div class="abs th" style="top:369px;"></div>
<div class="abs th" style="top:404px;"></div>
<svg class="abs" style="left:1014px;top:370px" width="30" height="27" viewBox="0 0 30 27"><path d="M4 12l4 3v9l-4-3z" fill="#d3a88c"/><path d="M8 15l20-5v8l-20 6z" fill="#dcb297"/><path d="M4 12l19-4.500 5 2.500-20 5z" fill="#e6c2a8"/></svg> <svg class="abs" style="left:1014px;top:405px" width="30" height="27" viewBox="0 0 30 27"><path d="M4 12l4 3v9l-4-3z" fill="#d3a88c"/><path d="M8 15l20-5v8l-20 6z" fill="#dcb297"/><path d="M4 12l19-4.500 5 2.500-20 5z" fill="#e6c2a8"/></svg>
<div class="abs" style="left:1052px;top:340px;font-size:12px;line-height:16px;color:#fff;">图层 2</div>
<div class="abs" style="left:1052px;top:375px;font-size:12px;line-height:16px;color:#000;">图层</div>
<div class="abs" style="left:1054px;top:411px;font-size:11px;line-height:14px;color:#000;font-style:italic;font-weight:bold;transform:skewX(-12deg);">背景</div>
<svg class="abs" style="left:1189px;top:412px" width="11" height="12" viewBox="0 0 11 12"><path d="M3 5v-1.500a2.500 2.500 0 0 1 5 0v1.500" fill="none" stroke="#333" stroke-width="1.400"/><rect x="1.500" y="5.500" width="8" height="5.500" fill="#eee" stroke="#333"/><rect x="3" y="7.500" width="5" height="1" fill="#777"/></svg>
<!-- layer scrollbar -->
<div class="abs" style="left:1215px;top:331px;width:15px;height:520px;background:#f0f0f0;"></div>
<svg class="abs" style="left:1218px;top:336px" width="10" height="7"><path d="M1.500 5.500l3.500-3.500 3.500 3.500" fill="none" stroke="#b4b4b4" stroke-width="2"/></svg>
<svg class="abs" style="left:1218px;top:838px" width="10" height="7"><path d="M1.500 1.500l3.500 3.500 3.500-3.500" fill="none" stroke="#b4b4b4" stroke-width="2"/></svg>
<!-- layer bottom bar -->
<div class="abs" style="left:987px;top:851px;width:243px;height:1px;background:#8e8e8e;"></div>
<svg class="abs" style="left:1028px;top:853px" width="184" height="15" viewBox="0 0 184 15">
 <g fill="none" stroke="#6a6a6a" stroke-width="1.400"><rect x="3" y="4.500" width="9" height="5" rx="2.500"/><rect x="10" y="4.500" width="9" height="5" rx="2.500"/></g>
 <text x="31" y="12" font-size="14" font-style="italic" font-weight="bold" font-family="Liberation Serif, serif" fill="#333">fx</text><path d="M46 10h4l-2 2.500z" fill="#222"/>
 <rect x="59.500" y="1.500" width="13" height="11" fill="#8c8c8c" stroke="#444"/><circle cx="66" cy="7" r="3.300" fill="#fff"/>
 <circle cx="94" cy="7" r="5.500" fill="#fff" stroke="#444"/><path d="M90.100 10.900A5.500 5.500 0 0 1 97.900 3.100z" fill="#333"/><path d="M100 10h4l-2 2.500z" fill="#222"/>
 <path d="M113.500 3.500h4l1 1.500h6v7h-11z" fill="#e8e8e8" stroke="#666"/>
 <path d="M142.500 3.500h9v9h-9z" fill="#f2f2f2" stroke="#666"/><path d="M142.500 8.500h4v4" fill="none" stroke="#333"/>
 <path d="M170.500 4.500h8l-1 8h-6z" fill="#eee" stroke="#444"/><path d="M169.500 3.500h10M173 2h4M173.500 6v5M176 6v5" stroke="#333" fill="none"/>
</svg>


<!-- ===== artwork ===== -->
<svg class="abs" style="left:0;top:0;pointer-events:none" width="1237" height="874" viewBox="0 0 1237 874">
<defs>
 <linearGradient id="gTop" gradientUnits="userSpaceOnUse" x1="229" y1="429" x2="841" y2="398"><stop offset="0" stop-color="#e0ba8c"/><stop offset=".6" stop-color="#dfb889"/><stop offset="1" stop-color="#dab080"/></linearGradient>
 <linearGradient id="gFront" gradientUnits="userSpaceOnUse" x1="343" y1="600" x2="838" y2="500"><stop offset="0" stop-color="#cda574"/><stop offset=".35" stop-color="#d1a97a"/><stop offset=".7" stop-color="#cfa677"/><stop offset="1" stop-color="#cba171"/></linearGradient>
 <linearGradient id="gFrontHi" gradientUnits="userSpaceOnUse" x1="590" y1="450" x2="603" y2="512"><stop offset="0" stop-color="#d6ad7b" stop-opacity=".7"/><stop offset=".4" stop-color="#d3a977" stop-opacity=".35"/><stop offset="1" stop-color="#cea674" stop-opacity="0"/></linearGradient>
 <linearGradient id="gLeft" gradientUnits="userSpaceOnUse" x1="229" y1="430" x2="346" y2="716"><stop offset="0" stop-color="#d9b181"/><stop offset="1" stop-color="#d5ab7b"/></linearGradient>
 <linearGradient id="gShadow" gradientUnits="userSpaceOnUse" x1="180" y1="612" x2="330" y2="690"><stop offset="0" stop-color="#d6d6d6"/><stop offset=".5" stop-color="#cacaca"/><stop offset="1" stop-color="#c4c4c4"/></linearGradient>
 <clipPath id="cFront"><path d="M342.400 501.300L841.400 397.800L834.600 598.700Q590.700 662.600 346.800 716.900z"/></clipPath>
 <clipPath id="cLeft"><path d="M229.100 429.200L342.400 501.300L346.800 716.900L234.900 633.200z"/></clipPath>
 <clipPath id="cTop"><path d="M229.100 429.200L342.400 501.300L841.400 397.800L705.200 338.500z"/></clipPath>
 <filter id="blur2" x="-10%" y="-10%" width="120%" height="120%"><feGaussianBlur stdDeviation="1.500"/></filter>
 <filter id="grain" x="0" y="0" width="100%" height="100%"><feTurbulence type="fractalNoise" baseFrequency="0.85" numOctaves="2" seed="7" result="n"/><feColorMatrix type="matrix" values="0 0 0 0 0.35  0 0 0 0 0.22  0 0 0 0 0.1  0.9 0.9 0.9 0 -1.05"/></filter>
 <clipPath id="cBox"><path d="M229.100 429.200L705.200 338.500L841.400 397.800L834.600 598.700Q590.700 662.600 346.800 716.900L234.900 633.200z"/></clipPath>
</defs>
<!-- shadow -->
<path d="M176 612.800L238 600L240 634L346.800 716.900L341 719.500z" fill="url(#gShadow)" filter="url(#blur2)"/>
<!-- faces -->
<path d="M229.100 429.200L342.400 501.300L346.800 716.900L234.900 633.200z" fill="url(#gLeft)"/>
<path d="M342.400 501.300L841.400 397.800L834.600 598.700Q590.700 662.600 346.800 716.900z" fill="url(#gFront)"/>
<path d="M229.100 429.200L342.400 501.300L841.400 397.800L705.200 338.500z" fill="url(#gTop)"/>
<!-- front: soft highlight under the top edge -->
<g clip-path="url(#cFront)">
 <path d="M342.400 501.300L841.400 397.800L841 470L343 570z" fill="url(#gFrontHi)"/>
 <!-- hills -->
 <path d="M345 692C380 670 420 596 466 592C505 590 530 640 573 634C615 628 640 600 659 568C690 520 720 488 762 486C790 486 815 495 840 508L835 600L346 718z" fill="#b98d5c" opacity=".3"/>
 <!-- grass -->
 <path d="M346.5 712.0C350.2 711.4 361.6 709.9 369.0 708.4C376.4 706.9 383.7 705.6 391.0 703.3C398.3 701.0 405.7 697.8 413.0 694.6C420.3 691.5 427.4 687.3 434.6 684.4C441.8 681.5 449.1 679.0 456.4 677.1C463.7 675.2 470.9 674.1 478.2 673.2C485.5 672.3 493.0 672.6 500.0 671.9C507.0 671.2 510.6 670.9 520.0 669.1C529.5 667.3 542.5 663.9 556.7 661.0C570.9 658.1 592.4 654.8 605.4 651.8C618.4 648.8 625.9 645.4 634.5 642.7C643.1 640.0 649.6 637.7 657.0 635.5C664.4 633.3 672.0 631.4 678.9 629.3C685.8 627.2 690.3 625.5 698.4 623.0C706.5 620.5 717.8 617.0 727.5 614.2C737.2 611.5 745.4 608.3 756.7 606.5C768.1 604.7 785.9 604.4 795.6 603.3C805.3 602.1 808.4 601.2 815.0 599.6C821.6 598.0 832.1 594.5 835.5 593.5L836 602Q590.7 664.600 346 719z" fill="#2f7d27" stroke="#0d2a0c" stroke-width="1.800"/>
 <g fill="#0f3a10"><circle cx="394.6" cy="705.0" r="1.700"/><circle cx="405.5" cy="701.1" r="1.700"/><circle cx="411.3" cy="699.4" r="1.700"/><circle cx="429.2" cy="692.7" r="1.700"/><circle cx="437.9" cy="690.5" r="1.700"/><circle cx="448.4" cy="686.3" r="1.700"/><circle cx="458.2" cy="683.7" r="1.700"/><circle cx="483.0" cy="680.0" r="1.700"/><circle cx="494.5" cy="679.3" r="1.700"/><circle cx="516.0" cy="674.9" r="1.700"/><circle cx="525.0" cy="673.0" r="1.700"/><circle cx="536.0" cy="670.0" r="1.700"/><circle cx="546.0" cy="667.5" r="1.700"/><circle cx="559.0" cy="664.3" r="1.700"/><circle cx="568.0" cy="662.5" r="1.700"/><circle cx="588.0" cy="658.7" r="1.700"/><circle cx="597.0" cy="657.2" r="1.700"/><circle cx="637.0" cy="646.5" r="1.700"/><circle cx="646.0" cy="644.3" r="1.700"/><circle cx="668.0" cy="638.3" r="1.700"/><circle cx="683.0" cy="633.5" r="1.700"/><circle cx="695.0" cy="630.3" r="1.700"/><circle cx="717.0" cy="624.0" r="1.700"/><circle cx="726.0" cy="621.0" r="1.700"/><circle cx="736.0" cy="618.0" r="1.700"/><circle cx="744.0" cy="616.0" r="1.700"/><circle cx="763.0" cy="613.5" r="1.700"/><circle cx="773.0" cy="611.5" r="1.700"/><circle cx="790.0" cy="608.3" r="1.700"/><circle cx="806.0" cy="604.5" r="1.700"/><circle cx="819.0" cy="601.8" r="1.700"/></g>
</g>
<g clip-path="url(#cBox)"><rect x="225" y="335" width="620" height="386" filter="url(#grain)" opacity=".16"/></g>
<!-- left face: darker wedge + edge -->
<g clip-path="url(#cLeft)">
 <path d="M230 549L345 693L348 720L232 634z" fill="#b98d5c" opacity=".3"/>
</g>
<path d="M342.400 501.300L346.800 716.900" stroke="#b98b55" stroke-width="1" fill="none" opacity=".8"/>
<path d="M229.100 429.200L342.400 501.300" stroke="#8a6335" stroke-width=".8" fill="none" opacity=".75"/>
<path d="M229.600 430L234.900 633.200" stroke="#e6cfa0" stroke-width="1" fill="none" opacity=".7"/>
<!-- top seam -->
<path d="M284.500 462.600L770 367" stroke="#7a5a34" stroke-width=".9" fill="none" opacity=".7"/>
<path d="M346 502.500L839 400.300" stroke="#d8b080" stroke-width="5" fill="none" opacity=".8" filter="url(#blur2)"/>
<!-- big plant on top/front -->
<g clip-path="url(#cTop)">
 <path d="M518 373.500L583 358L612.600 369.600C598 376 570 378.500 545 377.500C535 377 525 375.500 518 373.500z" fill="#1c7a22" stroke="#0a1f0a" stroke-width="1.300"/>
 <path d="M540 372L590 361L612 369.500C595 370 565 372.500 540 372z" fill="#15681c"/>
 <path d="M651.700 349.200L690 336L693.500 345.300C690 350 672 353 660 352C655 351.500 652.500 350.500 651.700 349.200z" fill="#1c7a22" stroke="#0a1f0a" stroke-width="1.300"/>
</g>
<!-- teardrop leaf -->
<path d="M708 383.500C693 377 687 368 692 363C698 357.500 722 356 732 360C741 364 740 371 733 375C726 379 716 381 708 383.500z" fill="#3a8f22" stroke="#0d2a0c" stroke-width="1.500"/>
<path d="M710 377.500C701 373.500 698 368.500 701 365.500C705 362 720 361.500 726 364C731 366.500 730.500 370.500 726 372.500C721 375 715 376 710 377.500z" fill="#4da22a" stroke="#17501a" stroke-width="1.200"/>
<path d="M712 373.500C706 371 704.500 368.500 706.500 366.800C709 365 718 364.800 721.500 366.200C724 367.500 723.500 369.500 721 370.800C718 372 715 372.500 712 373.500z" fill="#5aae33" stroke="#2a7420" stroke-width=".8"/>
<!-- heart leaf -->
<path d="M663.300 411.400C672 404 685 400.500 698.400 399.400C712 398.500 725 399.500 737.300 401.700C752 404 768 407 781 410.500C787 420 790 436 790 452.300C783 456 774 458 766.500 457.200C758 457 751 456 745 454.200C735 450 727 444 725.600 436.700C724 431 723.500 426 723.700 421.200C717 423 712 424 708 424C693 424.500 672 420 663.300 411.400z" fill="#1f7d27" stroke="#0a1f0a" stroke-width="1.600"/>
<path d="M664.500 411.600C673 419.500 693 423.600 708 423.200C712 423.200 717 422.300 723.700 420.400C745 419.500 765 415.500 779 411.500C755 416.500 700 418 664.500 411.600z" fill="#155f1b" opacity=".85"/>
<path d="M724.500 421.500C724.300 426 725 431 726.500 436.500C728 443.500 735.500 449.300 745.300 453.300C751 455.200 758 456.300 765 456.400C750 449 736 437 732 420.500z" fill="#155f1b" opacity=".85"/>
<!-- stems -->
<g fill="none" stroke="#14100a" stroke-width="2" stroke-linecap="round">
 <path d="M593.100 358.900C603 366 615 372.500 626.200 376.400C640 381 652 383.500 665.100 386.100C690 391 730 397 760 403.500C772 406 780 408 786 410"/>
 <path d="M614.500 355.600C625 360 635 363.500 645.600 366.700C660 371.500 672 375.500 684.600 379.300C705 385.500 735 393.500 760 401.500C772 405 782 408 788 410"/>
 <path d="M652.500 349.200C652.500 353 653.500 356 655.400 358.900C659 365 663 369 669 372.500C677 377 685 380 694.300 382.300C715 388 745 396 765 402C776 405.500 784 408.500 788.500 410.500"/>
 <path d="M776 409C781 420 786 436 789.500 452"/>
 <path d="M782 409.500C786 422 789 438 790.500 455"/>
 <path d="M788 409.500C790.500 420 792 435 791.800 446.500C791.500 460 791 470 790.500 480C789.500 492 789 500 787.900 509C785 528 781 543 776.200 557.800C771 574 765 590 757.700 606.500" stroke-width="2.200"/>
</g>
<!-- sprout on the left face -->
<path d="M265.500 624C263.500 631 268 645 282.500 656.500C284.500 648 283 633 272.500 624C270 622 266.500 622 265.500 624z" fill="#1f7a24" stroke="#0a1f0a" stroke-width="1.900"/>
<path d="M284.800 625.500C280 630 279 645 283 656.500C291 650 293.500 640 291 630C290 626.500 287 624 284.800 625.500z" fill="#1f7a24" stroke="#0a1f0a" stroke-width="1.900"/>
<path d="M283 656.500L284.500 672.500" stroke="#14100a" stroke-width="1.900" fill="none"/>
<!-- drooping flower -->
<path d="M494.900 617.800C492.500 617.500 490 617.600 487.700 618.300C485 619.300 483 620.800 481.500 622.900C479.800 625.300 478.900 628 478.900 631.200C479 634 479.900 636.500 481.500 638.400C482.800 639.800 484.300 640.800 486.100 641.500C485.300 644 485.100 646.800 485.600 649.700C486.100 652.800 487.300 655.500 489.200 656.900C491.500 657.300 493.800 656.500 495.900 654.900C498.600 652.900 501 650.400 503.100 647.700C504.400 646 505.400 644.300 506.200 642.500L512 620z" fill="#e0bc9b" stroke="#14100a" stroke-width="1.900" stroke-linejoin="round"/>
<path d="M493.800 620.400C491 621.500 488.700 623.200 487.100 625.500C485.200 628.300 484.400 631.600 484.600 635.300M492 648.500C494 648.500 496 648 497.900 647.100C499.800 646.100 501.400 644.700 502.600 643" fill="none" stroke="#14100a" stroke-width="1.800" stroke-linecap="round"/>
<path d="M512.400 617.800C514.600 618.100 516.700 618.800 518.500 619.900C521.200 622.100 523 625.300 524.200 629.100C525.500 633 526.400 637.100 526.800 641.500C527.200 645.500 527.400 649.600 527.300 653.800C527.200 658.200 526.900 662.500 526.300 666.700" fill="none" stroke="#14100a" stroke-width="1.900"/>
<ellipse cx="502.400" cy="610.700" rx="12.200" ry="6.700" transform="rotate(39.800 502.400 610.700)" fill="#1f7a24" stroke="#0a1f0a" stroke-width="1.900"/>
<ellipse cx="509.300" cy="631.200" rx="12.400" ry="6.700" transform="rotate(-73 509.300 631.200)" fill="#1f7a24" stroke="#0a1f0a" stroke-width="1.900"/>
<!-- bunny flower 1 -->
<path d="M597.700 601.900C593 590 592 578 595.100 567.800C597 562 599.500 558 602.500 555.200C598 551 596 544 597.700 536.700C599 533 603 533.500 605 535.500C608 539 609 544 609.300 548.400C614 550 620 553 623.900 557.100C625 549 627.500 542 632.700 537.700C635.500 537 636 542 635.600 546.400C635 553 633.500 558 632.700 562C634 565 634 568 633.700 569.800C632 578 628 585 623.900 590.200C620 595 616 599 611 601C607 602 602 602.500 597.700 601.900z" fill="#ddb999" stroke="#14100a" stroke-width="1.900" stroke-linejoin="round"/>
<path d="M600.200 579.900L606 582.400M609.900 584.900L615.200 589.600" stroke="#14100a" stroke-width="1.800" fill="none" stroke-linecap="round"/>
<path d="M597.700 601.900C596 606 595.500 610 595.700 614.500C597 622 600 628 601.600 634C603.500 641 605 646 605.400 651.500" fill="none" stroke="#14100a" stroke-width="1.900"/>
<ellipse cx="585" cy="597" rx="10.800" ry="7.200" transform="rotate(8 585 597)" fill="#1f7a24" stroke="#0a1f0a" stroke-width="1.900"/>
<path d="M598.600 603.800C603 601.500 608 600.500 612.300 600.900C615 604 617 608 617.100 612.500C617.500 615 617 617.500 616.100 619.400C611 617 606 613 598.600 603.800z" fill="#1f7a24" stroke="#0a1f0a" stroke-width="1.900" stroke-linejoin="round"/>
<path d="M582.100 621.300C583 624.500 583.800 627 584.600 629.700M587 616.500C587.500 620.500 588.500 624.500 589.900 628.100" stroke="#14100a" stroke-width="1.700" fill="none" stroke-linecap="round"/>
<!-- bunny 2 -->
<path d="M714.400 591.200C704 590 695 583 694 572C693.500 560 701 551 711 546C715 544 717.500 543.500 719.200 542.500C720 534 722 524 726.100 517.200C728 515.500 730 517 730 521.100C729.500 528 728 535 727 539.600C729 540.500 731 540.500 732 540.600C734 533 738 524 742.600 517.200C745 515.500 746.500 517.500 746.500 520.200C745 530 741 540 737.700 546.400C742 550 746 556 746.500 564C747 574 741 583 731 587.500C725 590 719 591 714.400 591.200z" fill="#ddb999" stroke="#14100a" stroke-width="1.900" stroke-linejoin="round"/>
<path d="M704.100 564.300L716.900 563M724.100 562.400L738.700 563.500" stroke="#14100a" stroke-width="1.900" fill="none" stroke-linecap="round"/>
<path d="M682.300 568.800C681.500 565 682 561.500 684.200 558.100M686.200 564.900C686.500 561.500 687.800 558.500 689.700 556.100M748.400 552.300C750 553.500 751 555 751.400 557.100M753.300 549.300C755 551 756.300 553 756.600 555.200" stroke="#14100a" stroke-width="1.700" fill="none" stroke-linecap="round"/>
<path d="M714.400 591.200L705.600 616.500" stroke="#14100a" stroke-width="1.900" fill="none"/>
<path d="M694.500 622C689 615 685.500 606 687.500 599.500C690 596 696 597 700 602C703.500 607 705 613 705.300 618z" fill="#1f7a24" stroke="#0a1f0a" stroke-width="1.900"/>
<path d="M705.600 618C708 611 714 605 721 603.500C725 603 727.500 605 726.500 609C725 613 720 615.500 712 617.500z" fill="#1f7a24" stroke="#0a1f0a" stroke-width="1.900"/>
<!-- annotation text -->
<g font-family="'Liberation Serif','Noto Serif CJK SC',serif" font-size="32" font-weight="300" text-anchor="end" fill="#f21010" stroke="#fff" stroke-width="7.500" stroke-linejoin="round" paint-order="stroke" letter-spacing="3.300">
 <text transform="translate(992.900,207.100) scale(1,1.08)">确定效果出来后</text>
 <text transform="translate(991.600,250) scale(1,1.08)">图层面板左上角混合选择</text>
 <text transform="translate(989.600,294.100) scale(1,1.08)">正片叠底</text>
</g>
<!-- arrows -->
<g stroke="#fff" stroke-width="8.500" stroke-linejoin="round" paint-order="stroke" fill="#f21010">
 <path d="M933.1 342.3L978.7 309.6L976.8 314.6L986.6 302.6L972.2 308.3L977.5 308.0L932.7 341.7z"/>
 <path d="M1072.2 392.2L1118.5 358.2L1116.7 363.2L1126.3 351.1L1112.0 357.0L1117.3 356.6L1071.8 391.6z"/>
</g>
</svg>
</div>
</body>
</html>
